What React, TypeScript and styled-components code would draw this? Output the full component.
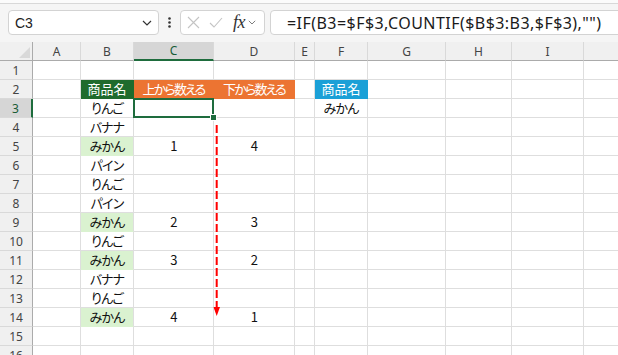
import React from "react";
import styled, { createGlobalStyle, css } from "styled-components";

const GlobalStyle = createGlobalStyle`
  html, body {
    margin: 0;
    padding: 0;
    background: #ffffff;
    overflow: hidden;
  }
  body {
    font-family: "Liberation Sans", Arial, sans-serif;
  }
`;

const COLS = [
  { name: "A", width: 48 },
  { name: "B", width: 53 },
  { name: "C", width: 80 },
  { name: "D", width: 81 },
  { name: "E", width: 20 },
  { name: "F", width: 53 },
  { name: "G", width: 78 },
  { name: "H", width: 66 },
  { name: "I", width: 72 },
  { name: "", width: 40 },
];

type Fill = "green" | "orange" | "blue" | "light";

type CellData = { text?: string; fill?: Fill };

// row -> column letter -> data
const DATA: Record<number, Record<string, CellData>> = {
  2: {
    B: { text: "商品名", fill: "green" },
    C: { text: "上から数える", fill: "orange" },
    D: { text: "下から数える", fill: "orange" },
    F: { text: "商品名", fill: "blue" },
  },
  3: { B: { text: "りんご" }, F: { text: "みかん" } },
  4: { B: { text: "バナナ" } },
  5: { B: { text: "みかん", fill: "light" }, C: { text: "1" }, D: { text: "4" } },
  6: { B: { text: "パイン" } },
  7: { B: { text: "りんご" } },
  8: { B: { text: "パイン" } },
  9: { B: { text: "みかん", fill: "light" }, C: { text: "2" }, D: { text: "3" } },
  10: { B: { text: "りんご" } },
  11: { B: { text: "みかん", fill: "light" }, C: { text: "3" }, D: { text: "2" } },
  12: { B: { text: "バナナ" } },
  13: { B: { text: "りんご" } },
  14: { B: { text: "みかん", fill: "light" }, C: { text: "4" }, D: { text: "1" } },
};

const FILLS: Record<Fill, { bg: string; fg: string; spacing: number }> = {
  green: { bg: "#1f6b2d", fg: "#ffffff", spacing: 0 },
  orange: { bg: "#ec7432", fg: "#ffffff", spacing: -1.8 },
  blue: { bg: "#1ba0d7", fg: "#ffffff", spacing: 0 },
  light: { bg: "#daf2d0", fg: "#111111", spacing: -0.9 },
};

const EXCEL_GREEN = "#1e6c3d";

const Page = styled.div`
  width: 618px;
  height: 355px;
  overflow: hidden;
  background: #f5f5f5;
`;

const TopStrip = styled.div`
  height: 3px;
  background: #fbfbfb;
  border-bottom: 1px solid #d8d8d8;
`;

const FormulaBar = styled.div`
  height: 38px;
  display: flex;
  align-items: center;
  padding-left: 8px;
  box-sizing: border-box;
  padding-bottom: 1px;
`;

const Box = styled.div`
  height: 25px;
  box-sizing: border-box;
  background: #ffffff;
  border: 1px solid #d3d3d3;
  border-radius: 4px;
  display: flex;
  align-items: center;
`;

const NameBox = styled(Box)`
  width: 151px;
  padding: 0 6px 0 6px;
  justify-content: space-between;
  font-size: 14px;
  color: #222;
`;

const Dots = styled.div`
  width: 21px;
  display: flex;
  justify-content: center;
`;

const ButtonBox = styled(Box)`
  width: 85px;
  margin-right: 5px;
  padding-left: 6px;
`;

const Fx = styled.span`
  font-family: "Liberation Serif", "Times New Roman", serif;
  font-style: italic;
  font-size: 18px;
  color: #333;
  margin-left: 10px;
  margin-right: 3px;
  letter-spacing: -0.5px;
`;

const FormulaInput = styled(Box)`
  flex: 1;
  margin-right: -20px;
  padding-left: 16px;
  font-family: "Noto Sans", sans-serif;
  font-size: 16px;
  letter-spacing: 0.45px;
  color: #1a1a1a;
  white-space: nowrap;
`;

const Sheet = styled.div`
  position: relative;
  display: grid;
  grid-template-columns: 33px ${COLS.map((c) => c.width + "px").join(" ")};
  grid-auto-rows: 19px;
  background: #ffffff;
`;

const Corner = styled.div`
  position: relative;
  background: #f0f0f0;
  border-right: 1px solid #ababab;
  border-bottom: 1px solid #ababab;
  box-sizing: border-box;

  &::after {
    content: "";
    position: absolute;
    right: 2px;
    bottom: 2px;
    width: 0;
    height: 0;
    border-left: 11px solid transparent;
    border-bottom: 11px solid #d9d9d9;
  }
`;

const headFont = css`
  font-family: "Noto Sans", "Liberation Sans", sans-serif;
  font-size: 12px;
  display: flex;
  align-items: center;
  justify-content: center;
  box-sizing: border-box;
`;

const ColHead = styled.div<{ $active?: boolean }>`
  ${headFont}
  background: ${(p) => (p.$active ? "#d6d6d6" : "#f0f0f0")};
  color: ${(p) => (p.$active ? "#185c37" : "#444444")};
  border-right: 1px solid #d9d9d9;
  border-bottom: ${(p) => (p.$active ? `2px solid ${EXCEL_GREEN}` : "1px solid #ababab")};
`;

const RowHead = styled.div<{ $active?: boolean }>`
  ${headFont}
  background: ${(p) => (p.$active ? "#d6d6d6" : "#f0f0f0")};
  color: ${(p) => (p.$active ? "#185c37" : "#444444")};
  border-bottom: 1px solid #d9d9d9;
  border-right: ${(p) => (p.$active ? `2px solid ${EXCEL_GREEN}` : "1px solid #ababab")};
`;

const Cell = styled.div<{ $fill?: Fill; $selected?: boolean }>`
  position: relative;
  box-sizing: border-box;
  display: flex;
  align-items: center;
  justify-content: center;
  white-space: nowrap;
  font-family: "Noto Sans CJK JP", "Noto Sans", sans-serif;
  font-feature-settings: "palt";
  font-size: 13px;
  letter-spacing: ${(p) => (p.$fill ? FILLS[p.$fill].spacing : -0.9)}px;
  line-height: 1;
  padding-bottom: 1px;
  background: ${(p) => (p.$fill ? FILLS[p.$fill].bg : "#ffffff")};
  color: ${(p) => (p.$fill ? FILLS[p.$fill].fg : "#111111")};
  border-right: 1px solid ${(p) => (p.$fill && p.$fill !== "light" ? FILLS[p.$fill].bg : "#dedede")};
  border-bottom: 1px solid ${(p) => (p.$fill ? FILLS[p.$fill].bg : "#dedede")};

  ${(p) =>
    p.$selected &&
    css`
      &::after {
        content: "";
        position: absolute;
        left: -1px;
        top: -1px;
        right: -1px;
        bottom: -1px;
        border: 2px solid ${EXCEL_GREEN};
        z-index: 2;
      }
      &::before {
        content: "";
        position: absolute;
        right: -4px;
        bottom: -4px;
        width: 5px;
        height: 5px;
        background: ${EXCEL_GREEN};
        border: 1px solid #ffffff;
        z-index: 3;
      }
    `}
`;

const Arrow = styled.svg`
  position: absolute;
  left: 211px;
  top: 83px;
  overflow: visible;
`;

const Chevron = ({ size = 10, color = "#444" }: { size?: number; color?: string }) => (
  <svg width={size} height={size * 0.6} viewBox="0 0 10 6">
    <path d="M1 1 L5 5 L9 1" fill="none" stroke={color} strokeWidth="1.2" />
  </svg>
);

const App = () => {
  const rows = Array.from({ length: 16 }, (_, i) => i + 1);
  return (
    <Page>
      <GlobalStyle />
      <TopStrip />
      <FormulaBar>
        <NameBox>
          <span>C3</span>
          <Chevron size={10} color="#333" />
        </NameBox>
        <Dots>
          <svg width="3" height="11" viewBox="0 0 3 11">
            <circle cx="1.5" cy="1.5" r="1.3" fill="#333" />
            <circle cx="1.5" cy="5.5" r="1.3" fill="#333" />
            <circle cx="1.5" cy="9.5" r="1.3" fill="#333" />
          </svg>
        </Dots>
        <ButtonBox>
          <svg width="13" height="13" viewBox="0 0 13 13">
            <path d="M1 1 L12 12 M12 1 L1 12" stroke="#c4c4c4" strokeWidth="1.1" fill="none" />
          </svg>
          <svg width="14" height="11" viewBox="0 0 14 11" style={{ marginLeft: 9 }}>
            <path d="M1 6 L5 10 L13 1" stroke="#c4c4c4" strokeWidth="1.1" fill="none" />
          </svg>
          <Fx>fx</Fx>
          <Chevron size={8} color="#777" />
        </ButtonBox>
        <FormulaInput>=IF(B3=$F$3,COUNTIF($B$3:B3,$F$3),"")</FormulaInput>
      </FormulaBar>
      <Sheet>
        <Corner />
        {COLS.map((c) => (
          <ColHead key={c.name || "z"} $active={c.name === "C"}>
            {c.name}
          </ColHead>
        ))}
        {rows.map((r) => (
          <React.Fragment key={r}>
            <RowHead $active={r === 3}>{r}</RowHead>
            {COLS.map((c) => {
              const d = DATA[r]?.[c.name];
              return (
                <Cell
                  key={c.name || "z"}
                  $fill={d?.fill}
                  $selected={r === 3 && c.name === "C"}
                >
                  {d?.text}
                </Cell>
              );
            })}
          </React.Fragment>
        ))}
        <Arrow width="12" height="200" viewBox="0 0 12 200">
          <line x1="5.7" y1="0" x2="5.7" y2="185" stroke="#ff0000" strokeWidth="2" strokeDasharray="8 3" />
          <polygon points="2.5,182 9,182 5.7,191" fill="#ff0000" />
        </Arrow>
      </Sheet>
    </Page>
  );
};

export default App;
